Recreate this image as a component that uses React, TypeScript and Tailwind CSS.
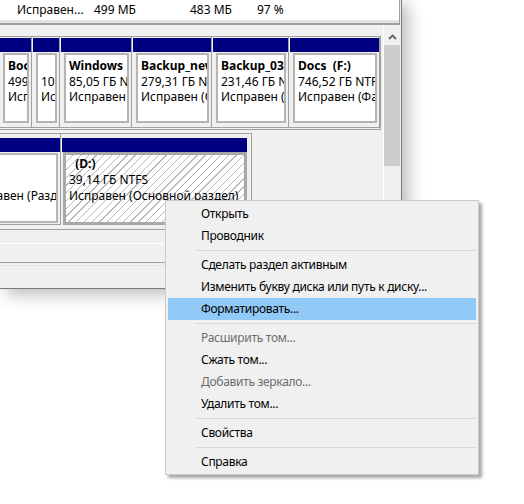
import clsx from "clsx";

type Volume = {
  w: number;
  name?: string;
  size?: string;
  status?: string;
};

type MenuItem = { label: string; disabled?: boolean; active?: boolean } | "sep";

const diskOne: Volume[] = [
  { w: 33, name: "Восстановить", size: "499 МБ NTFS", status: "Исправен (Раздел восстановления)" },
  { w: 28, size: "100 МБ", status: "Исправен (Шифрованный (EFI) системный раздел)" },
  { w: 72, name: "Windows  (C:)", size: "85,05 ГБ NTFS", status: "Исправен (Загрузка, Файл подкачки)" },
  { w: 80, name: "Backup_new  (E:)", size: "279,31 ГБ NTFS", status: "Исправен (Основной раздел)" },
  { w: 77, name: "Backup_03  (G:)", size: "231,46 ГБ NTFS", status: "Исправен (Основной раздел)" },
  { w: 91, name: "Docs  (F:)", size: "746,52 ГБ NTFS", status: "Исправен (Файл подкачки, Основной раздел)" },
];

const menu: MenuItem[] = [
  { label: "Открыть" },
  { label: "Проводник" },
  "sep",
  { label: "Сделать раздел активным" },
  { label: "Изменить букву диска или путь к диску..." },
  { label: "Форматировать...", active: true },
  "sep",
  { label: "Расширить том...", disabled: true },
  { label: "Сжать том..." },
  { label: "Добавить зеркало...", disabled: true },
  { label: "Удалить том..." },
  "sep",
  { label: "Свойства" },
  "sep",
  { label: "Справка" },
];

function VolumeCell({ v }: { v: Volume }) {
  return (
    <div
      className="flex h-full shrink-0 flex-col border-r border-b border-[#a0a0a0] pt-px"
      style={{ width: v.w }}
    >
      <div className="ml-px h-[14px] bg-[#000080]" />
      <div className="mt-px ml-[4px] mr-[2px] h-[70px] overflow-hidden whitespace-pre border-2 border-[#b4b4b4] bg-white pl-[3px] pt-[3px] leading-[15.5px]">
        <div className="h-[15.5px] font-bold">{v.name}</div>
        <div>{v.size}</div>
        <div>{v.status}</div>
      </div>
    </div>
  );
}

function ScrollBar() {
  return (
    <div className="flex h-full w-[17px] shrink-0 flex-col border-l border-white bg-[#f0f0f0] pt-[3px]">
      <div className="flex h-[17px] items-center justify-center">
        <svg width="9" height="6" viewBox="0 0 9 6">
          <polyline points="1,5 4.5,1.5 8,5" fill="none" stroke="#606060" strokeWidth="1.8" />
        </svg>
      </div>
      <div className="h-[121px] bg-[#cdcdcd]" />
    </div>
  );
}

function DiskWindow() {
  return (
    <div className="flex h-[289px] w-[402px] flex-col border-r border-b border-[#7a7a7a] bg-[#f0f0f0] shadow-[6px_5px_16px_rgba(0,0,0,0.28)]">
      {/* volume list, last row */}
      <div className="flex h-[25px] w-[400px] flex-col border-r border-[#a0a0a0]">
        <div className="flex h-[20px] items-center whitespace-nowrap bg-white pl-[17px]">
          <span className="w-[77px]">Исправен...</span>
          <span className="w-[96px]">499 МБ</span>
          <span className="w-[67px]">483 МБ</span>
          <span>97 %</span>
        </div>
        <div className="h-[3px] bg-[#e3e3e3]" />
        <div className="h-[2px] bg-[#a0a0a0]" />
      </div>

      {/* graphical view */}
      <div className="flex h-[204px]">
        <div className="flex w-[383px] flex-col overflow-hidden">
          <div className="-ml-px mt-[11px] flex h-[94px] w-[382px] shrink-0 border-t border-r border-b border-[#a0a0a0] pb-px">
            {diskOne.map((v, i) => (
              <VolumeCell key={i} v={v} />
            ))}
          </div>

          <div className="-ml-[60px] mt-[3px] flex h-[94px] w-[312px] shrink-0 border-t border-r border-[#a0a0a0] pr-[4px] pb-[2px]">
            <div className="flex h-full w-[121px] shrink-0 flex-col border-r border-b border-[#a0a0a0] pt-[4px]">
              <div className="ml-px h-[14px] bg-[#000080]" />
              <div className="mt-px ml-[4px] mr-[2px] h-[70px] overflow-hidden whitespace-pre border-2 border-[#b4b4b4] bg-white pt-px leading-[16px]">
                <div className="h-[16px]" />
                <div className="h-[16px]" />
                <div className="ml-[21px]">Исправен (Раздел восстановления)</div>
              </div>
            </div>
            <div className="flex h-full w-[186px] shrink-0 flex-col pt-[4px]">
              <div className="ml-px h-[14px] bg-[#000080]" />
              <div className="ml-[2px] h-[73px] w-[184px] overflow-hidden whitespace-pre border-[3px] border-[#a8a8a8] bg-[repeating-linear-gradient(135deg,#ffffff_0px,#ffffff_4.6px,#b8b8b8_4.6px,#b8b8b8_5.5px)] pl-[3px] pt-px leading-[16px]">
                <div className="font-bold">{"  (D:)"}</div>
                <div>39,14 ГБ NTFS</div>
                <div>Исправен (Основной раздел)</div>
              </div>
            </div>
          </div>
        </div>
        <ScrollBar />
      </div>

      {/* legend / status strip */}
      <div className="h-px bg-[#a0a0a0]" />
      <div className="h-[13px]" />
      <div className="h-px bg-white" />
      <div className="h-[18px]" />
      <div className="h-px bg-[#a0a0a0]" />
      <div className="h-[2px]" />
      <div className="h-px bg-[#e3e3e3]" />
      <div className="flex-1" />
    </div>
  );
}

function ContextMenu() {
  return (
    <div className="absolute left-[165px] top-[200px] w-[314px] border border-[#cccccc] bg-[#f0f0f0] pt-[2px] pb-px tracking-[-0.3px] shadow-[3px_3px_3px_rgba(0,0,0,0.35)]">
      {menu.map((it, i) =>
        it === "sep" ? (
          <div key={i} className="ml-[30px] mr-[2px] flex h-[7px] items-center">
            <div className="h-px w-full bg-[#d7d7d7]" />
          </div>
        ) : (
          <div
            key={i}
            className={clsx(
              "mx-[2px] flex h-[22px] items-center whitespace-nowrap pl-[33px]",
              it.active && "bg-[#91c9f7]",
              it.disabled ? "text-[#6d6d6d]" : "text-black"
            )}
          >
            {it.label}
          </div>
        )
      )}
    </div>
  );
}

export default function App() {
  return (
    <div className="relative h-[504px] w-[524px] overflow-hidden bg-white font-['Noto_Sans',sans-serif] text-[12px] text-black">
      <DiskWindow />
      <ContextMenu />
    </div>
  );
}
